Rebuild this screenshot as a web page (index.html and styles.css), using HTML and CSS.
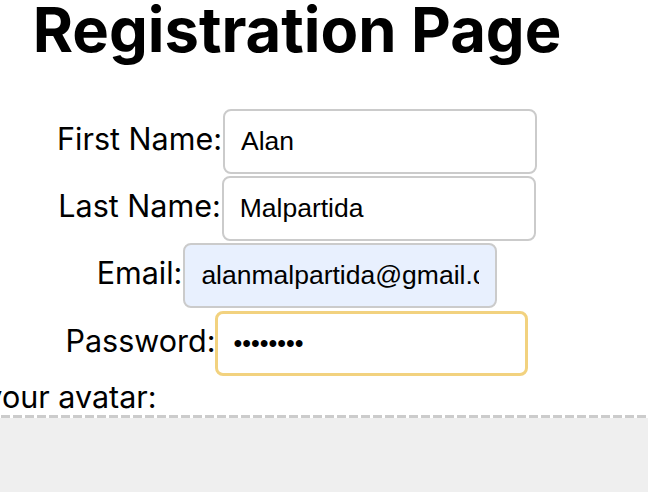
FILE: index.html
```html
<!DOCTYPE html>
<html lang="en">
<head>
<meta charset="utf-8">
<title>Registration Page</title>
<link rel="stylesheet" href="styles.css">
</head>
<body>
<div class="page">
  <h1 class="title">Registration Page</h1>
  <form class="form">
    <div class="row">
      <label class="label" for="first">First Name:</label>
      <input class="field" id="first" type="text" value="Alan">
    </div>
    <div class="row">
      <label class="label" for="last">Last Name:</label>
      <input class="field" id="last" type="text" value="Malpartida">
    </div>
    <div class="row">
      <label class="label" for="email">Email:</label>
      <input class="field field-autofill" id="email" type="email" value="alanmalpartida@gmail.com">
    </div>
    <div class="row">
      <label class="label" for="pass">Password:</label>
      <input class="field field-focus" id="pass" type="password" value="password">
    </div>
    <div class="avatar">
      <div class="avatar-label">Choose your avatar:</div>
      <div class="dropzone"></div>
    </div>
  </form>
</div>
</body>
</html>
```

FILE: styles.css
```css
html, body {
  margin: 0;
  padding: 0;
  background: #ffffff;
  overflow: hidden;
}

.page {
  width: 862px;
  margin-left: -134px;
  font-family: Inter, "Noto Sans", sans-serif;
  color: #000;
}

.title {
  margin: 0;
  font-size: 61.5px;
  line-height: 60px;
  font-weight: 700;
  text-align: center;
}

.form {
  margin-top: 49px;
  display: flex;
  flex-direction: column;
  gap: 2px;
}

.row {
  display: flex;
  justify-content: center;
  align-items: center;
}

.label {
  font-size: 30.5px;
  line-height: 36px;
  padding-bottom: 5px;
}

.field {
  box-sizing: border-box;
  width: 314px;
  height: 65px;
  margin-left: 1px;
  padding: 0 16px;
  border: 2px solid #cbcbcb;
  border-radius: 8px;
  background: #fff;
  font-family: "Liberation Sans", Arial, sans-serif;
  font-size: 26.5px;
  color: #000;
  outline: none;
}

.field-autofill {
  background: #e8f0fe;
}

.field-focus {
  margin-top: 1px;
  margin-left: 0;
  width: 313px;
  height: 65px;
  padding: 0 15px;
  border: 3px solid #f2d27f;
  font-size: 25px;
}

.avatar {
  margin-top: 1px;
}

.avatar-label {
  font-size: 30.5px;
  line-height: 36px;
}

.dropzone {
  height: 120px;
  background:
    repeating-linear-gradient(90deg, #cccccc 0 9px, #ffffff 9px 12px) 3px 0 / auto 3px repeat-x,
    #efefef;
}
```
